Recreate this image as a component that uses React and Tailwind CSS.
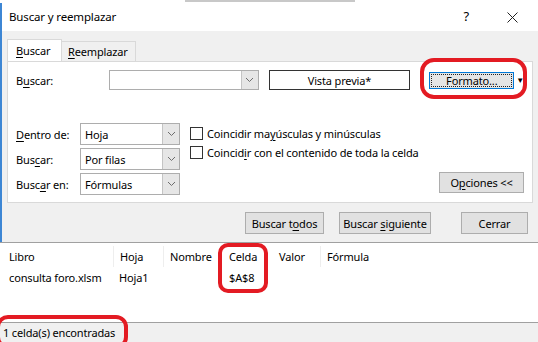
import React from "react";

const U = ({ children }) => <span className="underline underline-offset-[2px] decoration-[1px]">{children}</span>;

const Chevron = () => (
  <svg width="9" height="6" viewBox="0 0 9 6" fill="none">
    <polyline points="1,1 4.5,4.5 8,1" stroke="#6d6d6d" strokeWidth="1" />
  </svg>
);

const Combo = ({ w, h, value }) => (
  <div className={`flex bg-white border border-[#adadad] ${w} ${h}`}>
    <div className="flex-1 flex items-center pl-[4px] leading-none">
      <span>{value}</span>
    </div>
    <div className="w-[17px] bg-[#e6e6e6] border-l border-[#c4c4c4] flex items-center justify-center">
      <Chevron />
    </div>
  </div>
);

const Btn = ({ w, children }) => (
  <div className={`${w} h-[22px] bg-[#e1e1e1] border border-[#adadad] flex items-center justify-center leading-none`}>
    <span>{children}</span>
  </div>
);

const Check = ({ children }) => (
  <div className="flex items-center h-[19px]">
    <div className="w-[13px] h-[13px] border border-[#333] bg-white mr-[4px]" />
    <span className="leading-none">{children}</span>
  </div>
);

export default function App() {
  return (
    <div
      className="w-[538px] h-[342px] relative overflow-hidden bg-[#f0f0f0] text-[11px] tracking-[-0.15px] text-black whitespace-nowrap"
      style={{ fontFamily: '"Segoe UI", "Noto Sans", sans-serif' }}
    >
      {/* excel strip behind */}
      <div className="h-[3px] bg-white relative">
        <div className="absolute left-[185px] top-0 w-[170px] h-[2px] bg-[#c8c8c8]" />
      </div>
      <div className="h-[319px] border-l-[2px] border-[#3d86d4] flex flex-col">
        {/* title */}
        <div className="h-[28px] bg-white flex items-center pl-[7px] pr-[20px]">
          <span className="text-[11.5px]">Buscar y reemplazar</span>
          <span className="ml-auto mr-[38px] text-[13px]">?</span>
          <svg width="11" height="11" viewBox="0 0 11 11">
            <path d="M0.5 0.5 L10.5 10.5 M10.5 0.5 L0.5 10.5" stroke="#222" strokeWidth="1" />
          </svg>
        </div>
        {/* body */}
        <div className="flex-1 flex flex-col pt-[8px]">
          <div className="flex items-end pl-[5px] h-[22px]">
            <div className="h-[22px] w-[55px] bg-white border border-b-0 border-[#d9d9d9] flex items-center pl-[8px] leading-none">
              <span><U>B</U>uscar</span>
            </div>
            <div className="h-[20px] w-[74px] bg-[#f0f0f0] border border-l-0 border-b-0 border-[#d9d9d9] flex items-center pl-[6px] leading-none">
              <span><U>R</U>eemplazar</span>
            </div>
          </div>
          {/* panel */}
          <div className="ml-[5px] w-[526px] h-[142px] bg-white border border-[#d9d9d9] px-[8px] pt-[8px] flex flex-col">
            <div className="flex items-center h-[20px]">
              <div className="w-[93px] leading-none">B<U>u</U>scar:</div>
              <Combo w="w-[150px]" h="h-[20px]" value="" />
              <div className="ml-[10px] w-[142px] h-[20px] border border-[#333] flex items-center justify-center leading-none">
                <span>Vista previa*</span>
              </div>
              <div className="ml-[19px] w-[85px] h-[17px] bg-[#e5e5e5] border border-[#0078d7] p-[1px]">
                <div className="w-full h-full border border-dotted border-[#222] flex items-center justify-center leading-none">
                  <span>Formato...</span>
                </div>
              </div>
              <span className="ml-[2px] text-[8px]">▼</span>
            </div>
            <div className="flex mt-[33px]">
              <div className="flex flex-col gap-[3px]">
                <div className="flex items-center">
                  <div className="w-[64px] leading-none"><U>D</U>entro de:</div>
                  <Combo w="w-[100px]" h="h-[22px]" value="Hoja" />
                </div>
                <div className="flex items-center">
                  <div className="w-[64px] leading-none">Bus<U>c</U>ar:</div>
                  <Combo w="w-[100px]" h="h-[22px]" value="Por filas" />
                </div>
                <div className="flex items-center">
                  <div className="w-[64px] leading-none">Busc<U>a</U>r en:</div>
                  <Combo w="w-[100px]" h="h-[22px]" value="Fórmulas" />
                </div>
              </div>
              <div className="ml-[10px] pt-[1px] flex flex-col">
                <Check>Coincidir ma<U>y</U>úsculas y minúsculas</Check>
                <Check>Coincid<U>i</U>r con el contenido de toda la celda</Check>
              </div>
              <div className="ml-auto self-end mb-[2px]">
                <div className="w-[85px] h-[21px] bg-[#e1e1e1] border border-[#adadad] flex items-center justify-center leading-none">
                  <span>O<U>p</U>ciones &lt;&lt;</span>
                </div>
              </div>
            </div>
          </div>
          {/* buttons */}
          <div className="flex mt-[9px] pl-[243px]">
            <Btn w="w-[79px]">Buscar t<U>o</U>dos</Btn>
            <div className="ml-[15px]"><Btn w="w-[92px]">Buscar <U>s</U>iguiente</Btn></div>
            <div className="ml-[30px]"><Btn w="w-[67px]">Cerrar</Btn></div>
          </div>
          {/* results */}
          <div className="mt-[8px] flex-1 bg-white border-t border-[#a0a0a0] pt-[3px] -ml-[2px]">
            <div className="flex h-[21px] items-center leading-none">
              <div className="w-[113px] pl-[9px]">Libro</div>
              <div className="w-[50px] pl-[6px] h-full flex items-center border-l border-[#eeeeee]">Hoja</div>
              <div className="w-[60px] pl-[6px] h-full flex items-center border-l border-[#eeeeee]">Nombre</div>
              <div className="w-[50px] pl-[6px] h-full flex items-center">Celda</div>
              <div className="w-[47px] pl-[6px] h-full flex items-center">Valor</div>
              <div className="pl-[6px] h-full flex items-center border-l border-[#eeeeee]">Fórmula</div>
            </div>
            <div className="flex h-[21px] items-center leading-none">
              <div className="w-[113px] pl-[9px]">consulta foro.xlsm</div>
              <div className="w-[50px] pl-[6px]">Hoja1</div>
              <div className="w-[60px] pl-[6px]"></div>
              <div className="w-[50px] pl-[6px]">$A$8</div>
            </div>
          </div>
        </div>
      </div>
      {/* status bar */}
      <div className="h-[20px] border-t border-[#a0a0a0] flex items-center pl-[3px] leading-none">
        <span>1 celda(s) encontradas</span>
      </div>

      {/* red annotations */}
      <div className="absolute left-[420px] top-[58px] w-[107px] h-[41px] border-[4px] border-[#e31b23] rounded-[14px]" />
      <div className="absolute left-[218px] top-[243px] w-[50px] h-[50px] border-[4px] border-[#e31b23] rounded-[10px]" />
      <div className="absolute left-[-4px] top-[315px] w-[132px] h-[34px] border-[4px] border-[#e31b23] rounded-[12px]" />
    </div>
  );
}
